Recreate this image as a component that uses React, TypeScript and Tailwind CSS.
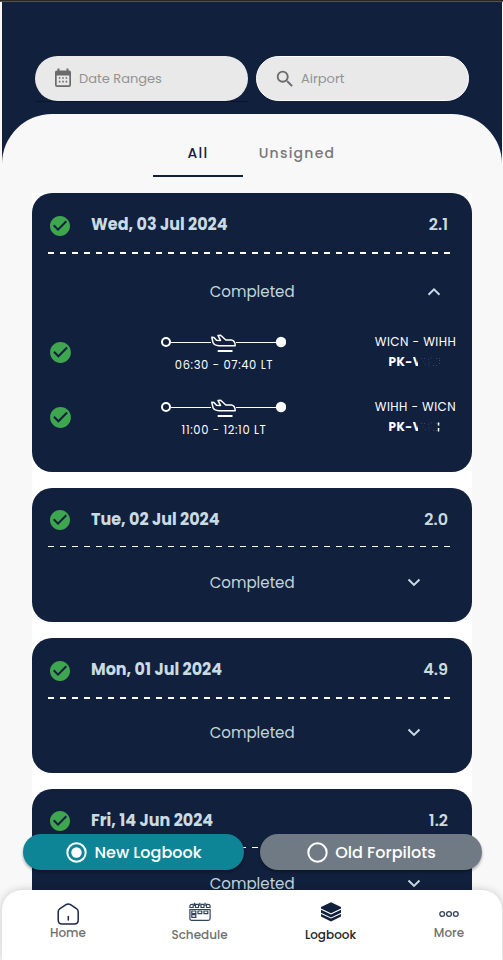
import { MdCheckCircle, MdSearch } from "react-icons/md";

const font = "font-['Poppins','Inter','Liberation_Sans',sans-serif]";

function Chevron({ up = false }: { up?: boolean }) {
  return (
    <svg width="14" height="10" viewBox="0 0 14 10" fill="none" stroke="#c9dbe2" strokeWidth="2">
      <path d={up ? "M1.500 7.700 7 2.300l5.500 5.400" : "M1.500 1.500 7 6.900l5.500-5.400"} />
    </svg>
  );
}

function Route() {
  return (
    <svg className="block" width="126" height="24" viewBox="0 0 126 24" fill="none" stroke="#fff">
      <circle cx="6" cy="10" r="4" strokeWidth="2" />
      <path d="M11 10.500H51M76 10.500H116" strokeWidth="1" />
      <circle cx="121" cy="10" r="5.200" fill="#fafafa" stroke="none" />
      <path
        d="M51.800 5.300 54 5.500 56.500 8.300 60.500 8.400 58 3.500 60.700 3.300 65.800 8 71.500 8Q75.200 8.500 75.200 13.800L59 13.800Q54 13.300 53 10.500Z"
        strokeWidth="1.500"
        strokeLinejoin="round"
      />
      <path d="M57.700 19H72.500" strokeWidth="2" />
    </svg>
  );
}

function Flight({ time, route, tail }: { time: string; route: string; tail?: boolean }) {
  return (
    <div className="flex h-[65px] text-white">
      <div className="w-[112px] pl-4 pt-[21px]">
        <MdCheckCircle size={25} color="#3fa650" />
      </div>
      <div className="flex w-[159px] flex-col items-center pt-[13px]">
        <div className="pr-[1px]">
          <Route />
        </div>
        <div className="pl-px text-[11.500px] leading-[18px] tracking-[0.640px]">{time}</div>
      </div>
      <div className="ml-[62px] flex w-[101px] flex-col items-center pt-[14px] text-[12px] leading-[18px]">
        <div className="tracking-[0.420px]">{route}</div>
        <div className="mt-[2px] flex w-[54px] items-center font-bold">
          <span className="text-[12px] tracking-[0.450px]">PK-</span>
          <span className="w-[5px] overflow-hidden text-[12px]">V</span>
          <svg className="ml-[2px] shrink-0" width="21" height="12" viewBox="0 0 21 12" stroke="#3c4963" strokeWidth="1" strokeDasharray="1 2">
            <path d="M1 2.500H5M8 3.500L12 1.500M16 2.500H20M3 5.500L6 9.500M9 6.500V10M13 9.500H18M19.500 4V10" />
            {tail && <path d="M18.500 1.500V4.500M18.500 7V10.500" stroke="#fff" strokeWidth="1.500" strokeDasharray="none" />}
          </svg>
        </div>
      </div>
    </div>
  );
}

type DayProps = { date: string; hours: string; height: string; head: string; dash: string; body: string; open?: boolean; icon?: string };

function Day({ date, hours, height, head, dash, body, open, icon = "pt-[21px]" }: DayProps) {
  return (
    <section className={`shrink-0 overflow-hidden rounded-[20px] bg-[#11203c] ${height}`}>
      <div className={`flex items-start ${head}`}>
        <div className={`w-[59px] pl-4 ${icon}`}>
          <MdCheckCircle size={24} color="#3fa650" />
        </div>
        <div className="flex-1 origin-left scale-x-[0.94] pt-[19px] text-[17px] font-bold leading-6 text-[#c9dbe2]">
          <span className="whitespace-nowrap">{date}</span>
        </div>
        <div className="pr-6 pt-[20px] text-[16px] font-semibold leading-6 text-[#c9dbe2]">{hours}</div>
      </div>
      <div className={`ml-4 w-[402px] bg-[repeating-linear-gradient(90deg,#fff_0_6px,transparent_6px_12px)] ${dash}`} />
      <div className={`relative flex items-center justify-center ${body}`}>
        <span className="scale-x-[0.94] text-[16px] leading-6 text-[#c2d5dc]">Completed</span>
        <span className={open ? "absolute right-[31px]" : "absolute right-[51px]"}>
          <Chevron up={open} />
        </span>
      </div>
      {open && (
        <div className="mt-[-10px]">
          <Flight time="06:30 - 07:40 LT" route="WICN - WIHH" />
          <Flight time="11:00 - 12:10 LT" route="WIHH - WICN" tail />
        </div>
      )}
    </section>
  );
}

function CalendarIcon() {
  return (
    <svg width="18" height="20" viewBox="0 0 18 20" fill="#6b6b6b">
      <path fillRule="evenodd" d="M3.500 .5h2v2h7V.5h2v2a2 2 0 0 1 2.500 2V17a2 2 0 0 1-2 2H3a2 2 0 0 1-2-2V4.500A2 2 0 0 1 3.500 2.500ZM2.700 7.500v9.800h12.600V7.500Z" />
      <path d="M4.800 9.200h1.600v1.600H4.800zM8.200 9.200h1.600v1.600H8.200zM11.600 9.200h1.600v1.600h-1.600zM4.800 12.800h1.600v1.600H4.800zM8.200 12.800h1.600v1.600H8.200zM11.600 12.800h1.600v1.600h-1.600z" />
    </svg>
  );
}

function HomeIcon() {
  return (
    <svg width="24" height="24" viewBox="0 0 24 24" fill="none" stroke="#17264a" strokeWidth="1.500" strokeLinecap="round">
      <path d="M2.200 9.700Q2.200 7.800 4 6.600L10 2.700Q12.300 1.300 14.500 2.700L20.500 6.600Q22.200 7.800 22.200 9.700V18Q22.200 22 18.500 22H6Q2.200 22 2.200 18Z" />
      <path d="M12.300 14.500V18" />
    </svg>
  );
}

function ScheduleIcon() {
  return (
    <svg width="22" height="20" viewBox="0 0 22 20" fill="none" stroke="#34415e" strokeWidth="1.200">
      <path d="M.9 5.500V3.700Q.9 2.300 3 2.300H4.200V5.500ZM6.500 2.300H9.500V5.500H6.500ZM12 2.300H15V5.500H12ZM17.500 2.300H19Q21.100 2.300 21.100 3.700V5.500H17.500ZM.9 7.500H21.100V16.500Q21.100 18.300 19.300 18.300H2.700Q.9 18.300.9 16.500Z" />
      <path d="M5.500.8V4M10.800.8V4M16.100.8V4" />
      <path d="M2.800 9H6.800V11.700H2.800ZM2.800 12.700H6.800V15.400H2.800ZM9 9H12.800V11.700H9ZM15 9H18.800V11.700H15Z" />
    </svg>
  );
}

function LogbookIcon() {
  return (
    <svg width="22" height="20" viewBox="0 0 22 20" fill="#11203c">
      <path d="M11 .3 21 5V6.500L11 11.200 1 6.500V5ZM1 7.700 11 12.400 21 7.700V10.700L11 15.400 1 10.700ZM1 11.900 11 16.600 21 11.900V14.500L11 19.400 1 14.500Z" />
    </svg>
  );
}

function MoreIcon() {
  return (
    <svg width="20" height="8" viewBox="0 0 20 8" fill="none" stroke="#34415e" strokeWidth="1.300">
      <circle cx="3.200" cy="4" r="2.400" />
      <circle cx="10" cy="4" r="2.400" />
      <circle cx="16.800" cy="4" r="2.400" />
    </svg>
  );
}

export default function App() {
  return (
    <div className={`relative flex h-[960px] w-[503px] flex-col overflow-hidden bg-[#f8f8f8] ${font}`}>
      <div className="h-[2px] shrink-0 border-b border-[#55524f] bg-[#292725]" />
      <div className="mx-[2px] mr-px flex h-[888px] flex-col overflow-hidden bg-[linear-gradient(#11203c_0_165px,#f8f8f8_165px)]">
        <header className="flex h-[112px] shrink-0 gap-2 pl-[33px] pt-[54px]">
          <div className="flex h-[45px] w-[213px] items-center rounded-[23px] bg-[#e9e9e9] pl-[19px] text-[13px] text-[#929292]">
            <span className="mt-[-1px]"><CalendarIcon /></span>
            <span className="ml-[7px]">Date Ranges</span>
          </div>
          <div className="flex h-[45px] w-[213px] items-center rounded-[23px] border border-white bg-[#e9e9e9] pl-[17px] text-[13px] text-[#929292]">
            <MdSearch size={22} color="#6b6b6b" />
            <span className="ml-[5px]">Airport</span>
          </div>
        </header>
        <div className="ml-[33px] mt-[-13px] mb-3 h-px w-[213px] shrink-0 bg-[#09152b]" />
        <main className="flex min-h-0 flex-1 flex-col rounded-t-[50px] bg-[#f8f8f8]">
          <nav className="ml-[151px] mt-[15px] flex h-12 shrink-0 text-[14px] font-medium tracking-[1.250px]">
            <div className="flex w-[90px] items-center justify-center border-b-2 border-[#11203c] pt-[2px] text-[#11203c]">All</div>
            <div className="flex w-[108px] items-center justify-center text-[#777]">Unsigned</div>
          </nav>
          <div className="ml-[30px] mt-4 flex min-h-0 w-[440px] flex-1 flex-col gap-4 overflow-hidden bg-white">
            <Day date="Wed, 03 Jul 2024" hours="2.1" height="h-[279px]" head="h-[59px]" dash="h-[2px]" body="h-[75px]" open />
            <Day date="Tue, 02 Jul 2024" hours="2.0" height="h-[134px]" head="h-[58px]" dash="h-px" body="h-[71px]" icon="pt-[20px]" />
            <Day date="Mon, 01 Jul 2024" hours="4.9" height="h-[135px]" head="h-[59px]" dash="h-[2px]" body="h-[68px]" />
            <Day date="Fri, 14 Jun 2024" hours="1.2" height="h-[135px]" head="h-[58px]" dash="h-px" body="h-[71px]" icon="pt-[20px]" />
          </div>
        </main>
      </div>
      <div className="absolute left-[23px] top-[834px] flex gap-4 text-[16px] font-medium text-white">
        <div className="flex h-9 w-[221px] items-center justify-center gap-[7px] rounded-full bg-[#0e8597] pl-px shadow-[0_2px_3px_#0005]">
          <svg width="21" height="21" viewBox="0 0 21 21" fill="none" stroke="#fff">
            <circle cx="10.500" cy="10.500" r="9.200" strokeWidth="2" />
            <circle cx="10.500" cy="10.500" r="5.200" fill="#fff" stroke="none" />
          </svg>
          <span className="mt-px">New Logbook</span>
        </div>
        <div className="flex h-9 w-[222px] items-center justify-center gap-[7px] rounded-full bg-[#707a84] pl-px shadow-[0_2px_3px_#0005]">
          <svg width="21" height="21" viewBox="0 0 21 21" fill="none" stroke="#fff">
            <circle cx="10.500" cy="10.500" r="9.200" strokeWidth="2" />
          </svg>
          <span className="mt-px">Old Forpilots</span>
        </div>
      </div>
      <footer className="z-10 ml-[2px] flex h-[70px] w-[500px] shrink-0 rounded-t-[20px] bg-white text-[12px] font-medium leading-[18px] text-[#707070] shadow-[0_0_8px_#0003]">
        <div className="flex w-[132px] flex-col items-center pt-3">
          <HomeIcon />
          <span className="mt-[-2px]">Home</span>
        </div>
        <div className="flex w-[131px] flex-col items-center pt-3">
          <ScheduleIcon />
          <span className="mt-1">Schedule</span>
        </div>
        <div className="flex w-[131px] flex-col items-center pt-3">
          <LogbookIcon />
          <span className="mt-1 text-[#222]">Logbook</span>
        </div>
        <div className="flex w-[106px] flex-col items-center pt-5">
          <MoreIcon />
          <span className="mt-[6px]">More</span>
        </div>
      </footer>
    </div>
  );
}
